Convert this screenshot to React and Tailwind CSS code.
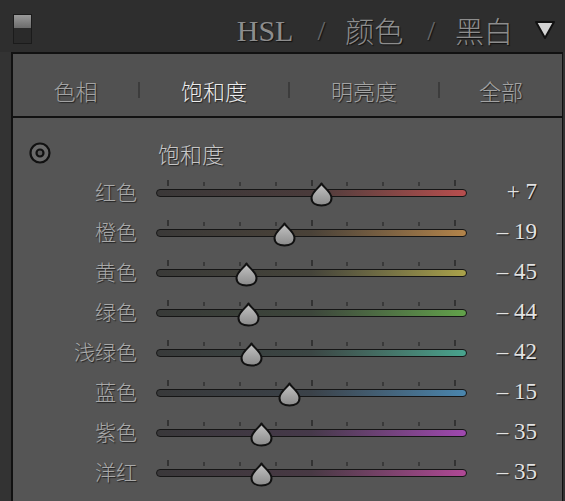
import React from "react";

const rows = [
  { label: "红色", value: 7, text: "+ 7", grad: "bg-linear-to-r from-[#3a3838] via-[#4a3b3b] to-[#b84e4e]" },
  { label: "橙色", value: -19, text: "– 19", grad: "bg-linear-to-r from-[#3a3938] via-[#4a4238] to-[#b3844a]" },
  { label: "黄色", value: -45, text: "– 45", grad: "bg-linear-to-r from-[#3a3a38] via-[#45443a] to-[#aaa24a]" },
  { label: "绿色", value: -44, text: "– 44", grad: "bg-linear-to-r from-[#383a38] via-[#3d463b] to-[#62a24a]" },
  { label: "浅绿色", value: -42, text: "– 42", grad: "bg-linear-to-r from-[#383a3a] via-[#3b4644] to-[#48a48e]" },
  { label: "蓝色", value: -15, text: "– 15", grad: "bg-linear-to-r from-[#38393a] via-[#3b4249] to-[#4a86ae]" },
  { label: "紫色", value: -35, text: "– 35", grad: "bg-linear-to-r from-[#39383a] via-[#46394a] to-[#a048b0]" },
  { label: "洋红", value: -35, text: "– 35", grad: "bg-linear-to-r from-[#3a383a] via-[#483944] to-[#b04896]" },
];

const cjk = "font-['Noto_Sans_CJK_SC','Noto_Sans_CJK_JP',sans-serif]";
const serif = "font-['Liberation_Serif',serif]";

function Thumb({ id }) {
  return (
    <svg width="23" height="25" viewBox="0 0 23 25">
      <defs>
        <linearGradient id={id} x1="0" y1="0" x2="0" y2="1">
          <stop offset="0" stopColor="#c4c4c4" />
          <stop offset="1" stopColor="#8a8a8a" />
        </linearGradient>
      </defs>
      <path
        d="M11.5 1.5 C13.5 5.5 21.5 10 21.5 16 C21.5 21 17 23.5 11.5 23.5 C6 23.5 1.5 21 1.5 16 C1.5 10 9.5 5.5 11.5 1.5 Z"
        fill={`url(#${id})`}
        stroke="#111"
        strokeWidth="2"
        strokeLinejoin="round"
      />
    </svg>
  );
}

function Slider({ value, grad, idx }) {
  const center = 12 + ((value + 100) / 200) * 287;
  const ticks = [0, 1, 2, 3, 4, 5, 6, 7, 8];
  return (
    <div className="relative w-[311px] h-[40px] pt-[9px] flex flex-col">
      <div className="h-[6px] flex justify-between items-end px-[11px]">
        {ticks.map((t) => (
          <div
            key={t}
            className={
              t === 0 || t === 4 || t === 8
                ? "w-[2px] h-[6px] bg-[#333333]"
                : "w-[2px] h-[4px] bg-[#3a3a3a]"
            }
          />
        ))}
      </div>
      <div className={`mt-[3px] h-[8px] rounded-full border border-[#161616] ${grad}`} />
      <div className="absolute top-[11px]" style={{ left: center - 11.5 }}>
        <Thumb id={`tg${idx}`} />
      </div>
    </div>
  );
}

export default function App() {
  return (
    <div className="w-[565px] h-[501px] bg-[#2e2e2e] overflow-hidden flex flex-col">
      {/* Header */}
      <div className="h-[52px] flex items-center shrink-0">
        <div className="ml-[13px] mt-[5px] w-[19px] h-[30px] border border-[#1b1b1b] flex flex-col">
          <div className="h-[13px] bg-linear-to-b from-[#9a9a9a] to-[#6c6c6c]" />
          <div className="flex-1 bg-[#2a2a2a]" />
        </div>
        <div className="ml-auto mt-[9px] flex items-center text-[#8d8d8d] [text-shadow:1px_1px_1px_#111]">
          <span className={`${serif} text-[30px] leading-none`}>HSL</span>
          <span className={`${serif} text-[28px] leading-none ml-[24px] text-[#6a6a6a]`}>/</span>
          <span className={`${cjk} text-[29px] leading-none ml-[20px] font-light`}>颜色</span>
          <span className={`${serif} text-[28px] leading-none ml-[24px] text-[#6a6a6a]`}>/</span>
          <span className={`${cjk} text-[29px] leading-none ml-[20px] font-light`}>黑白</span>
        </div>
        <svg width="22" height="20" viewBox="0 0 22 20" className="ml-[21px] mr-[9px] mt-[8px]">
          <polygon points="2,2 20,2 11,18" fill="#d4d4d4" stroke="#111" strokeWidth="2" strokeLinejoin="round" />
        </svg>
      </div>

      {/* Body */}
      <div className="flex-1 flex bg-[#333333]">
        <div className="w-[11px] shrink-0" />
        <div className="flex-1 flex flex-col border-t-2 border-l-2 border-r border-[#111] mr-[2px]">
          {/* Tabs */}
          <div className={`h-[64px] shrink-0 pt-[10px] flex items-center bg-[#515151] border-b-2 border-[#111] ${cjk} text-[22px] font-light [text-shadow:1px_1px_1px_#222]`}>
            <div className="w-[125px] text-center text-[#a3a3a3]">色相</div>
            <div className="w-[2px] h-[16px] bg-[#3c3c3c]" />
            <div className="w-[148px] text-center text-[#ececec]">饱和度</div>
            <div className="w-[2px] h-[16px] bg-[#3c3c3c]" />
            <div className="w-[148px] text-center text-[#a3a3a3]">明亮度</div>
            <div className="w-[2px] h-[16px] bg-[#3c3c3c]" />
            <div className="flex-1 text-center text-[#a3a3a3]">全部</div>
          </div>
          {/* Content */}
          <div className="flex-1 bg-[#555555] pt-[17px]">
            <div className="h-[36px] flex items-center">
              <svg width="24" height="24" viewBox="0 0 24 24" className="ml-[15px]">
                <circle cx="12" cy="12" r="9.5" fill="#6a6a6a" stroke="#111" strokeWidth="2.2" />
                <circle cx="12" cy="12" r="3.5" fill="#5a5a5a" stroke="#111" strokeWidth="2.2" />
              </svg>
              <span className={`${cjk} ml-[106px] text-[22px] font-light text-[#c6c6c6] [text-shadow:1px_1px_1px_#222]`}>
                饱和度
              </span>
            </div>
            {rows.map((r, i) => (
              <div key={r.label} className="h-[40px] flex items-center">
                <div className={`w-[124px] text-right ${cjk} text-[21px] font-light text-[#a9a9a9] [text-shadow:1px_1px_1px_#222] leading-none`}>
                  {r.label}
                </div>
                <div className="ml-[19px]">
                  <Slider value={r.value} grad={r.grad} idx={i} />
                </div>
                <div className={`w-[70px] text-right ${serif} text-[23px] text-[#e2e2e2] [text-shadow:1px_1px_1px_#111] leading-none`}>
                  {r.text}
                </div>
              </div>
            ))}
          </div>
        </div>
      </div>
    </div>
  );
}
